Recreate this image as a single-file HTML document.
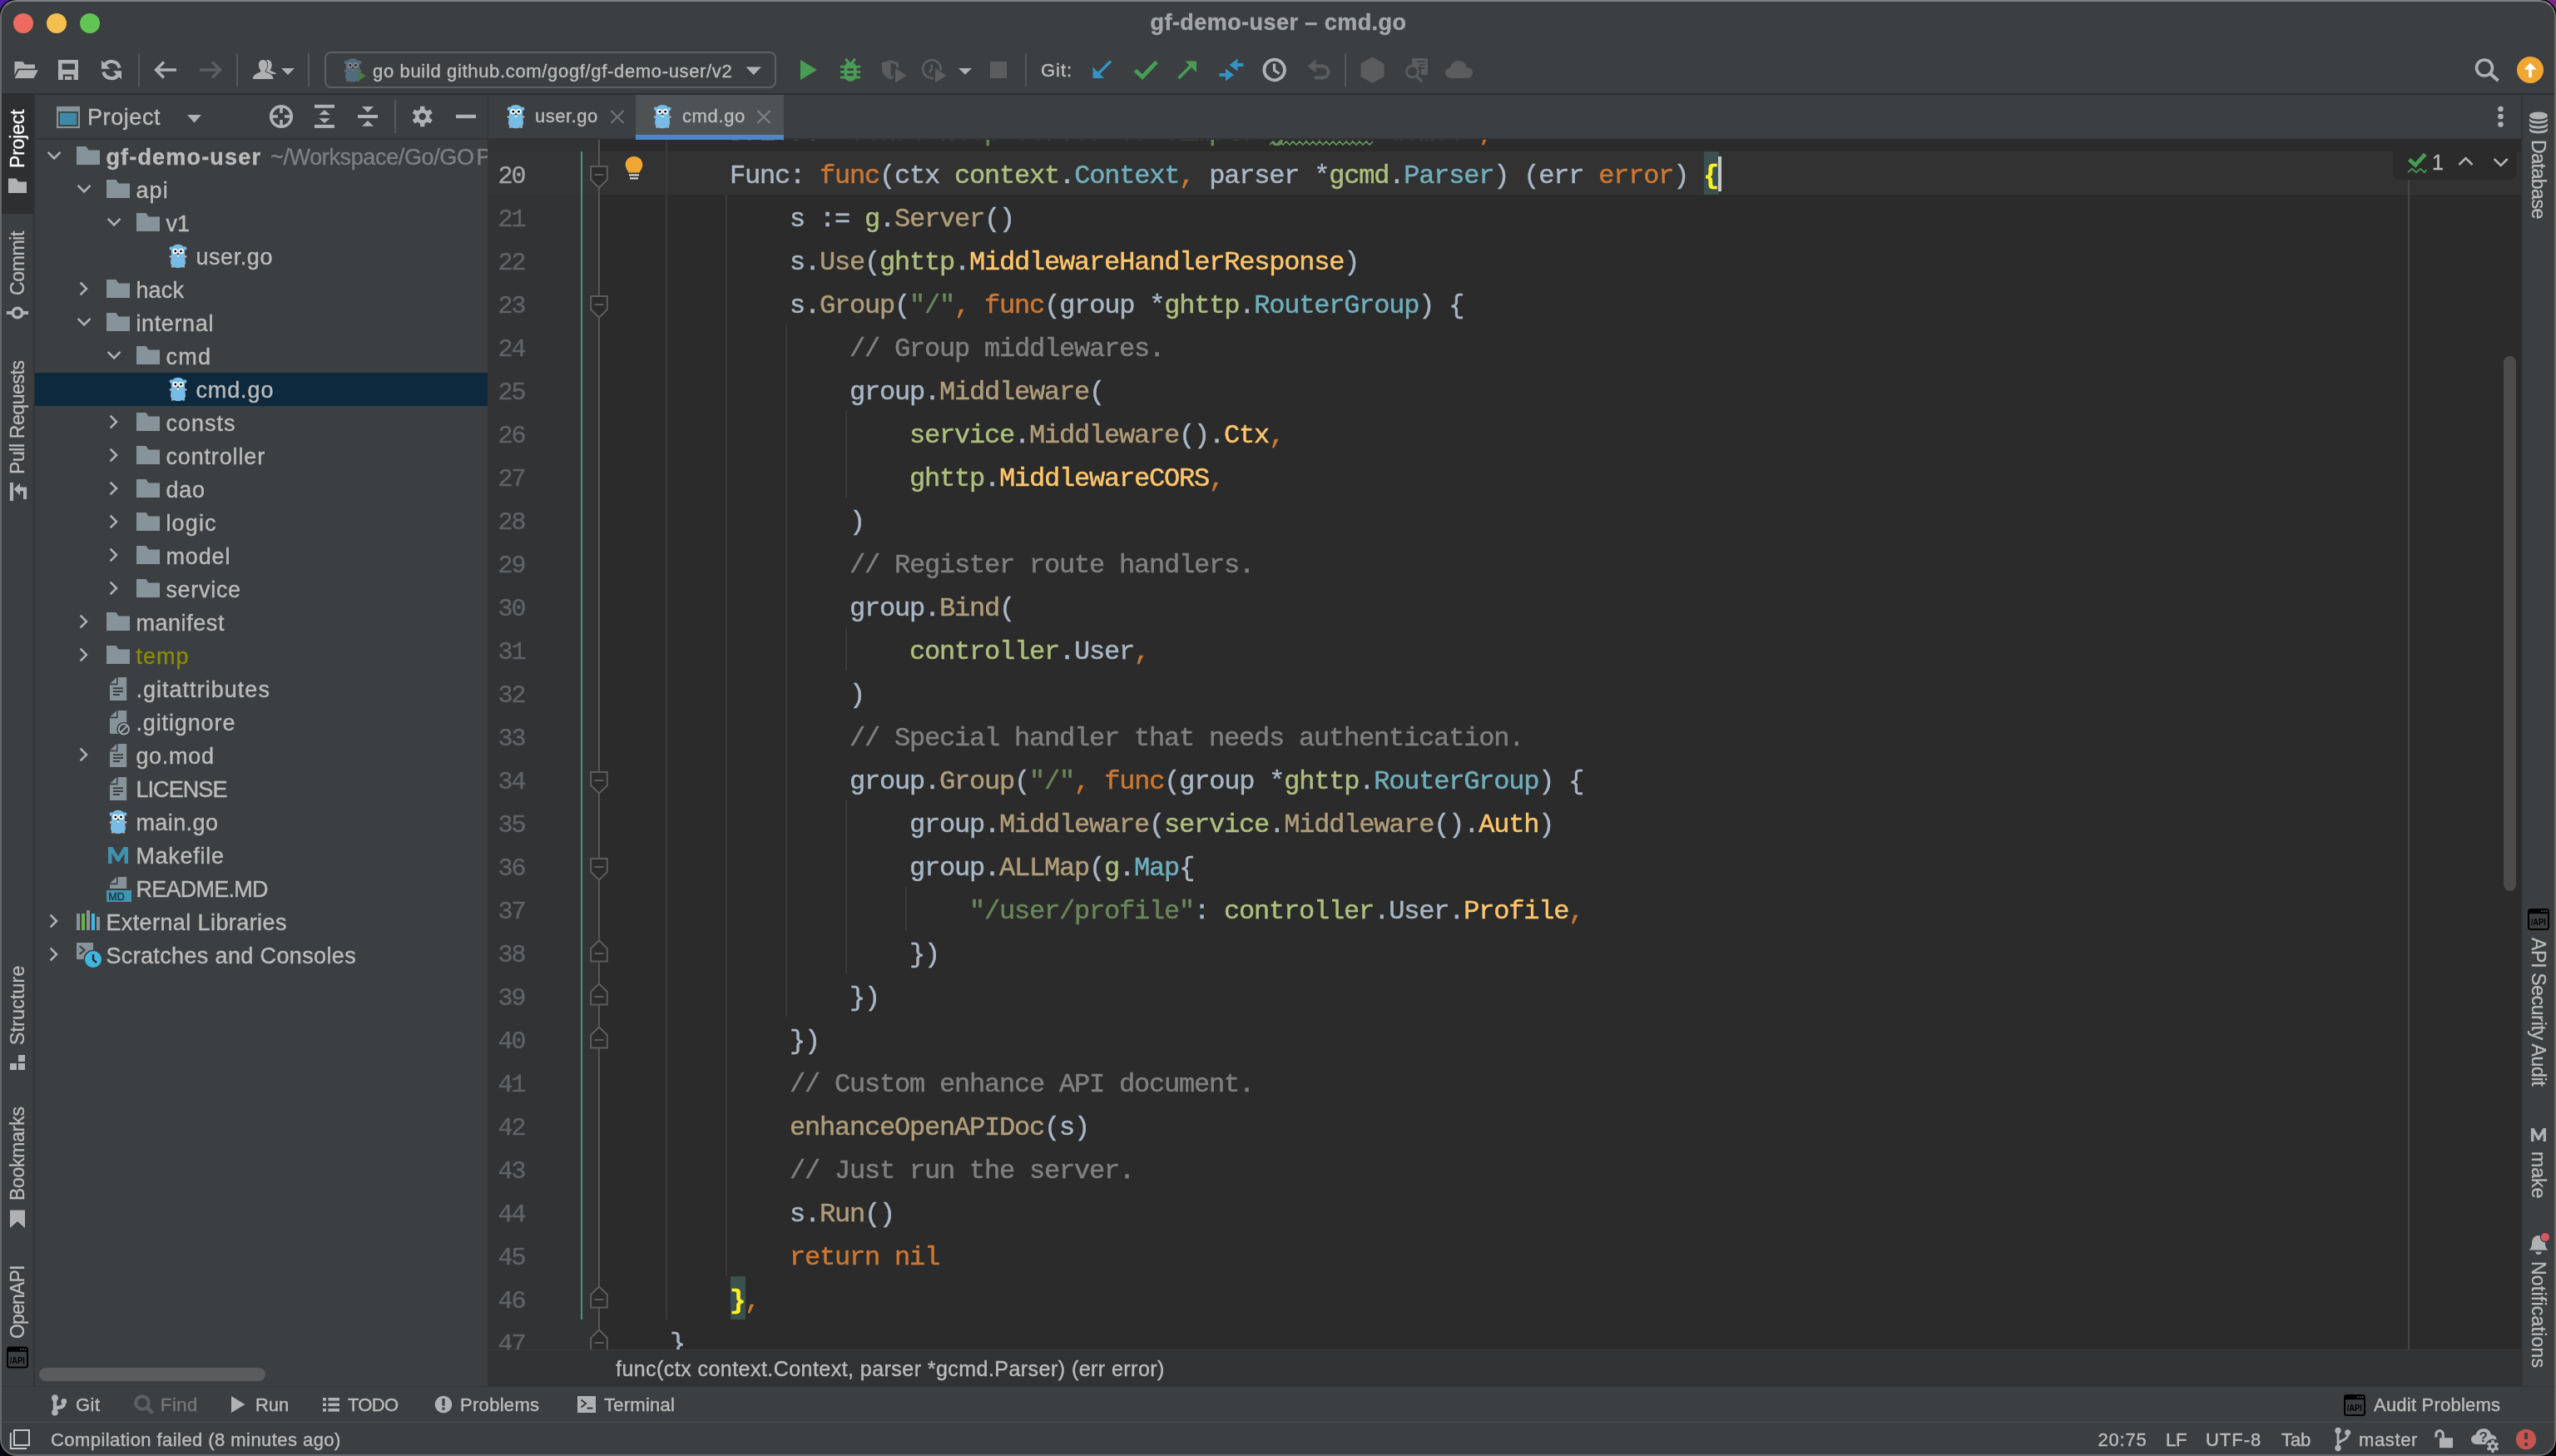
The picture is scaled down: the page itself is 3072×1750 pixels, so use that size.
<!DOCTYPE html>
<html lang="en"><head><meta charset="utf-8"><title>gf-demo-user – cmd.go</title>
<style>
html,body{margin:0;padding:0;}
body{width:3072px;height:1750px;overflow:hidden;background:#0a0814;font-family:"Liberation Sans",sans-serif;position:relative;}
.win{position:absolute;left:0;top:0;width:3072px;height:1750px;border-radius:20px;background:#3c3f41;overflow:hidden;will-change:transform;box-shadow:0 0 0 1.5px #000;}
.frame{position:absolute;left:0;top:0;width:3068px;height:1746px;border-radius:20px;border:2px solid #66686a;border-top-color:#7e8082;pointer-events:none;}
.b{position:absolute;display:block;}
.t{position:absolute;white-space:pre;line-height:1;-webkit-text-stroke:0.4px currentColor;}
.cl{position:absolute;left:0;white-space:pre;font-family:"Liberation Mono",monospace;font-size:32px;letter-spacing:-1.2px;line-height:52px;height:52px;color:#a9b7c6;-webkit-text-stroke:0.45px currentColor;}
.k{color:#cc7832}.p{color:#afbf7e}.y{color:#6fafbd}.f{color:#b09d79}.d{color:#ffc66d}.s{color:#6a8759}.c{color:#808080}.hb{color:#ffef28;font-weight:bold}
.ln{position:absolute;font-family:"Liberation Mono",monospace;font-size:30px;letter-spacing:-2px;-webkit-text-stroke:0.4px currentColor;line-height:52px;height:52px;color:#606366;white-space:pre;}
.vt{position:absolute;white-space:pre;line-height:1;font-size:23px;color:#bbbbbb;transform-origin:0 0;-webkit-text-stroke:0.3px currentColor;}
</style></head>
<body>
<div class="b" style="left:0;top:0;width:40px;height:40px;background:#4a1f9e"></div><div class="b" style="left:3032px;top:0;width:40px;height:40px;background:#782b8a"></div>
<div class="win">
<div class="b" style="left:16px;top:16px;width:24px;height:24px;background:#ec6a5e;border-radius:50%;"></div>
<div class="b" style="left:56px;top:16px;width:24px;height:24px;background:#f4bf4f;border-radius:50%;"></div>
<div class="b" style="left:96px;top:16px;width:24px;height:24px;background:#61c554;border-radius:50%;"></div>
<div class="t fit" style="left:1383.5px;top:13.74px;font-size:27px;color:#a5a6a8;font-weight:700;letter-spacing:0.448px;text-indent:-1.00px;">gf-demo-user – cmd.go</div>
<div class="b" style="left:0px;top:112px;width:3072px;height:2px;background:#2d2f30;"></div>
<svg class="b" style="left:0px;top:56px;" width="3072" height="56" viewBox="0 56 3072 56"><path d="M17.5,74 H27.5 L29.7,77.6 H42 V82.6 H21.3 L17.5,90.5 Z" fill="#afb1b3"/><path d="M22.8,84.3 H45.8 L40.5,94 H17.5 Z" fill="#afb1b3"/><path d="M70,72 H94 V96 H88.6 V89.4 H75.8 V96 H70 Z M74.6,76.4 V83.8 H90 V76.4 Z" fill="#afb1b3" fill-rule="evenodd"/><rect x="78" y="91.8" width="8.2" height="4.2" fill="#afb1b3"/><path d="M125.2,79.5 A9.8,9.8 0 0 1 143.6,81.5" fill="none" stroke="#afb1b3" stroke-width="4.2"/><path d="M122,72.5 V82.8 H132.3 Z" fill="#afb1b3"/><path d="M142.8,88.5 A9.8,9.8 0 0 1 124.4,86.5" fill="none" stroke="#afb1b3" stroke-width="4.2"/><path d="M146,95.5 V85.2 H135.7 Z" fill="#afb1b3"/><rect x="166" y="64" width="2" height="40" fill="#55585a"/><rect x="284" y="64" width="2" height="40" fill="#55585a"/><rect x="370" y="64" width="2" height="40" fill="#55585a"/><rect x="1232" y="64" width="2" height="40" fill="#55585a"/><rect x="1616" y="64" width="2" height="40" fill="#55585a"/><path d="M212,84 H187.5 M197.0,74.5 L187.5,84 L197.0,93.5" fill="none" stroke="#afb1b3" stroke-width="3.4"/><path d="M240,84 H264.5 M255.0,74.5 L264.5,84 L255.0,93.5" fill="none" stroke="#5c5f61" stroke-width="3.4"/><path d="M321.5,72 C324.9,72 326.7,74.600 326.700,78 C326.700,81 325.500,83.400 324.300,84.600 C326.500,86.300 331.500,86.600 332.100,88.900 H316 V72.800 C317.600,72.300 319.500,72 321.500,72 Z" fill="#afb1b3"/><path d="M316,72 C319.4,72 321.2,74.6 321.2,78 C321.2,81 320,83.4 318.6,84.8 C318.6,85.8 319,86.4 320,86.9 C323.5,88.4 328,89.5 328.6,94.9 H303.7 C304.3,89.5 308.6,88.4 312,86.9 C313,86.4 313.4,85.8 313.4,84.8 C312,83.4 310.9,81 310.9,78 C310.9,74.6 312.6,72 316,72 Z" fill="#afb1b3" stroke="#3c3f41" stroke-width="1.8" paint-order="stroke"/><path d="M338,82 H354 L346.0,90 Z" fill="#afb1b3"/><rect x="391" y="63" width="541" height="42" rx="7" ry="7" fill="none" stroke="#5e6163" stroke-width="2"/><g transform="translate(413.5,70) scale(1.0)" opacity="0.36"><circle cx="2.4" cy="5" r="2.3" fill="#76bce6"/><circle cx="18.6" cy="5" r="2.3" fill="#76bce6"/><circle cx="1.5" cy="15" r="1.4" fill="#d2a283"/><circle cx="19.5" cy="15" r="1.4" fill="#d2a283"/><circle cx="3.9" cy="26.8" r="1.5" fill="#d2a283"/><circle cx="17.1" cy="26.8" r="1.5" fill="#d2a283"/><path d="M10.5,0.3 C15.6,0.3 18.6,3.4 18.6,8 L18.6,14 C18.6,17 19.5,19 19.5,22 C19.5,26 15.5,28.5 10.5,28.5 C5.5,28.5 1.5,26 1.5,22 C1.5,19 2.4,17 2.4,14 L2.4,8 C2.4,3.4 5.4,0.3 10.5,0.3 Z" fill="#76bce6"/><circle cx="7" cy="8.4" r="3.2" fill="#fff"/><circle cx="14" cy="8.4" r="3.2" fill="#fff"/><circle cx="7.3" cy="8.5" r="1.4" fill="#000"/><circle cx="14" cy="8.5" r="1.4" fill="#000"/><ellipse cx="10.5" cy="12.6" rx="1.7" ry="1.1" fill="#d2a283"/><ellipse cx="10.5" cy="11.6" rx="1.2" ry="0.9" fill="#111"/><rect x="9.6" y="13.3" width="1.9" height="1.7" fill="#fff"/></g><path d="M430,84.6 L439.8,91.2 L430,97.8 Z" fill="#46784c"/><path d="M896.5,80.5 H915 L905.75,90 Z" fill="#afb1b3"/><path d="M962,72 L982,84 L962,96 Z" fill="#499c54"/><path d="M1022,74.6 C1026.6,74.6 1029.6,78 1029.6,82.5 V90 C1029.6,94.5 1026.4,97.8 1022,97.8 C1017.6,97.8 1014.6,94.5 1014.6,90 V82.5 C1014.6,78 1017.4,74.6 1022,74.6 Z" fill="#499c54"/><path d="M1016.2,70.8 L1020.4,76 M1027.8,70.8 L1023.6,76" stroke="#499c54" stroke-width="3" fill="none"/><rect x="1010" y="78.8" width="24.2" height="2.8" fill="#499c54"/><rect x="1010" y="85.0" width="24.2" height="2.8" fill="#499c54"/><rect x="1010" y="91.6" width="24.2" height="2.8" fill="#499c54"/><rect x="1018.4" y="82.2" width="7.4" height="2.8" fill="#3c3f41"/><rect x="1018.4" y="88.3" width="7.4" height="2.8" fill="#3c3f41"/><path d="M1060,75.5 L1070,72.3 L1080,75.5 V81 H1077 V77.6 L1070.6,75.6 V92.5 L1073.5,90.5 V94 L1070,95.6 C1063.5,92.5 1060,88 1060,82 Z" fill="#5b5c5d"/><path d="M1076,82 L1089.6,90.8 L1076,99.6 Z" fill="#5b5c5d"/><path d="M1122,93.6 A10.8,10.8 0 1 1 1130.6,84.5" fill="none" stroke="#5b5c5d" stroke-width="2.8"/><path d="M1119.8,77.5 V83.6 L1116.6,87.2" fill="none" stroke="#5b5c5d" stroke-width="2.4"/><path d="M1124,82 L1137.6,90.8 L1124,99.6 Z" fill="#5b5c5d"/><path d="M1152,82 H1168 L1160.0,89.8 Z" fill="#afb1b3"/><rect x="1190" y="74" width="20" height="20" fill="#5b5c5d"/><path d="M1335,73.5 L1317,91.5" stroke="#3592c4" stroke-width="3.6" fill="none"/><path d="M1313.5,94 V80.5 L1327,94 Z" fill="#3592c4"/><path d="M1364.5,84.5 L1373,92.5 L1390,74.5" stroke="#499c54" stroke-width="4.8" fill="none"/><path d="M1416.5,94 L1434,76.5" stroke="#499c54" stroke-width="3.6" fill="none"/><path d="M1438,73.5 V87 L1424.500,73.500 Z" fill="#499c54"/><path d="M1494.5,78 H1485" stroke="#3592c4" stroke-width="4" fill="none"/><path d="M1487.5,70.500 V85.5 L1477.500,78 Z" fill="#3592c4"/><path d="M1465.5,90 H1475" stroke="#3592c4" stroke-width="4" fill="none"/><path d="M1473,82.500 V97.5 L1483,90 Z" fill="#3592c4"/><circle cx="1531.7" cy="84" r="12.3" fill="none" stroke="#afb1b3" stroke-width="3.8"/><path d="M1531.500,76.5 V84.5 L1537.5,88.5" fill="none" stroke="#afb1b3" stroke-width="3.2"/><path d="M1578,79.5 H1589 C1594,79.5 1596.5,83 1596.5,86.500 C1596.5,90.5 1594,93.5 1589,93.5 H1580" fill="none" stroke="#5b5c5d" stroke-width="3.8"/><path d="M1581.500,71.500 V87.5 L1571.500,79.5 Z" fill="#5b5c5d"/><path d="M1649.500,68.500 L1663.500,76.500 V92 L1649.500,100 L1635.500,92 V76.500 Z" fill="#5b5c5d"/><path d="M1697,70 H1716 V90 H1708 V80 H1697 Z" fill="#5b5c5d"/><path d="M1703,74 H1712.500 M1706,78 H1712.500 M1708,82 H1712.500" stroke="#3c3f41" stroke-width="1.6"/><circle cx="1697.5" cy="86" r="7" fill="#3c3f41" stroke="#5b5c5d" stroke-width="2.8"/><path d="M1702.500,91.500 L1709,98" stroke="#5b5c5d" stroke-width="3.2"/><path d="M1745,94 C1739,94 1737,90 1737,87.500 C1737,84 1740,81.500 1743,81.500 C1744,76 1748.500,73 1753,73 C1758.500,73 1762,77 1762.500,81 C1767,81 1770,84 1770,87.500 C1770,91 1767.500,94 1763,94 Z" fill="#5b5c5d"/><circle cx="2986" cy="81.500" r="9.5" fill="none" stroke="#afb1b3" stroke-width="3.6"/><path d="M2993,88.500 L3002.500,97" stroke="#afb1b3" stroke-width="4"/><circle cx="3041" cy="84" r="16" fill="#f0a732"/><path d="M3041,93 V78" stroke="#fff" stroke-width="3.6"/><path d="M3033.500,83.500 L3041,75.500 L3048.500,83.500 Z" fill="#fff"/></svg>
<div class="t fit" style="left:448px;top:74.88px;font-size:22px;color:#bbbbbb;letter-spacing:0.660px;text-indent:0.00px;">go build github.com/gogf/gf-demo-user/v2</div>
<div class="t fit" style="left:1252px;top:74.38px;font-size:22px;color:#bbbbbb;letter-spacing:0.963px;text-indent:-1.00px;">Git:</div>
<div class="b" style="left:0px;top:114px;width:40px;height:1552px;background:#3c3f41;"></div>
<div class="b" style="left:2px;top:114px;width:38px;height:143px;background:#2d2f31;"></div>
<div class="b" style="left:40px;top:114px;width:2px;height:1552px;background:#323435;"></div>
<div class="vt fit" style="left:9.53px;top:200.5px;font-size:23px;color:#ffffff;transform:rotate(-90deg);letter-spacing:-0.199px;text-indent:-1.00px;">Project</div>
<div class="vt fit" style="left:9.53px;top:354px;font-size:23px;color:#bbbbbb;transform:rotate(-90deg);letter-spacing:-0.366px;text-indent:-1.00px;">Commit</div>
<div class="vt fit" style="left:9.53px;top:568.5px;font-size:23px;color:#bbbbbb;transform:rotate(-90deg);letter-spacing:-0.409px;text-indent:-1.00px;">Pull Requests</div>
<div class="vt fit" style="left:9.53px;top:1255px;font-size:23px;color:#bbbbbb;transform:rotate(-90deg);letter-spacing:0.247px;text-indent:-1.00px;">Structure</div>
<div class="vt fit" style="left:9.53px;top:1442.4px;font-size:23px;color:#bbbbbb;transform:rotate(-90deg);letter-spacing:-0.267px;text-indent:-1.00px;">Bookmarks</div>
<div class="vt fit" style="left:9.53px;top:1608px;font-size:23px;color:#bbbbbb;transform:rotate(-90deg);letter-spacing:-0.824px;text-indent:-1.00px;">OpenAPI</div>
<svg class="b" style="left:0px;top:114px;" width="40" height="1552" viewBox="0 114 40 1552"><path d="M10,214.500 H19.500 L22,218.500 H32 V232 H10 Z" fill="#afb1b3"/><rect x="7.9" y="374" width="26.2" height="4" fill="#afb1b3"/><circle cx="21" cy="376" r="7.6" fill="#afb1b3"/><circle cx="21" cy="376" r="3.8" fill="#3c3f41"/><rect x="11.9" y="580" width="4.2" height="22" fill="#afb1b3"/><path d="M16.700,588 L24.100,580.700 V585.600 H32.100 V600 H28 V590.200 H24.100 V595.200 Z" fill="#afb1b3"/><rect x="12" y="1278" width="8" height="8" fill="#afb1b3"/><rect x="22" y="1278" width="8" height="8" fill="#afb1b3"/><rect x="22" y="1268" width="8" height="8" fill="#afb1b3"/><path d="M12,1454.500 H30 V1476 L21,1468 L12,1476 Z" fill="#afb1b3"/><rect x="9" y="1619.5" width="24" height="24" rx="2.5" fill="#3c3f41" stroke="#000" stroke-width="2"/><rect x="9" y="1619.5" width="24" height="5.2" fill="#000"/><rect x="24.1" y="1620.9" width="1.5" height="1.5" fill="#777"/><rect x="27.1" y="1620.9" width="1.5" height="1.5" fill="#777"/><rect x="30.0" y="1620.9" width="1.5" height="1.5" fill="#777"/><text x="11.8" y="1638.5" font-family="Liberation Sans, sans-serif" font-weight="700" font-size="11.5" fill="#000" textLength="18" lengthAdjust="spacingAndGlyphs">/API</text></svg>
<div class="b" style="left:3030px;top:114px;width:42px;height:1552px;background:#3c3f41;"></div>
<div class="b" style="left:3030px;top:114px;width:2px;height:1552px;background:#323435;"></div>
<div class="vt fit" style="left:3062.47px;top:168.5px;font-size:23px;color:#bbbbbb;transform:rotate(90deg);letter-spacing:-0.452px;text-indent:-1.00px;">Database</div>
<div class="vt fit" style="left:3062.47px;top:1127px;font-size:23px;color:#bbbbbb;transform:rotate(90deg);letter-spacing:-0.322px;text-indent:0.00px;">API Security Audit</div>
<div class="vt fit" style="left:3062.47px;top:1385px;font-size:23px;color:#bbbbbb;transform:rotate(90deg);letter-spacing:0.016px;text-indent:-1.00px;">make</div>
<div class="vt fit" style="left:3062.47px;top:1516.5px;font-size:23px;color:#bbbbbb;transform:rotate(90deg);letter-spacing:0.227px;text-indent:-1.00px;">Notifications</div>
<svg class="b" style="left:3030px;top:114px;" width="42" height="1552" viewBox="3030 114 42 1552"><ellipse cx="3051" cy="139" rx="11" ry="4.6" fill="#afb1b3"/><path d="M3040,141.5 C3040,147.0 3062,147.0 3062,141.5 V144.5 C3062,150.0 3040,150.0 3040,144.5 Z" fill="#afb1b3"/><path d="M3040,147.5 C3040,153.0 3062,153.0 3062,147.5 V150.5 C3062,156.0 3040,156.0 3040,150.5 Z" fill="#afb1b3"/><path d="M3040,153.3 C3040,158.8 3062,158.8 3062,153.3 V156.3 C3062,161.8 3040,161.8 3040,156.3 Z" fill="#afb1b3"/><rect x="3039" y="1093" width="24" height="24" rx="2.5" fill="#3c3f41" stroke="#000" stroke-width="2"/><rect x="3039" y="1093" width="24" height="5.2" fill="#000"/><rect x="3054.1" y="1094.4" width="1.5" height="1.5" fill="#777"/><rect x="3057.1" y="1094.4" width="1.5" height="1.5" fill="#777"/><rect x="3060.0" y="1094.4" width="1.5" height="1.5" fill="#777"/><text x="3041.8" y="1112" font-family="Liberation Sans, sans-serif" font-weight="700" font-size="11.5" fill="#000" textLength="18" lengthAdjust="spacingAndGlyphs">/API</text><path d="M3042,1372 V1356 H3045.600 L3051,1365.500 L3056.400,1356 H3060 V1372 H3056.600 V1362.500 L3052,1370.500 H3050 L3045.400,1362.500 V1372 Z" fill="#afb1b3"/><path d="M3051,1485 C3056,1485 3059,1489 3059,1494 C3059,1499 3061,1501 3062.500,1502.500 H3039.500 C3041,1501 3043,1499 3043,1494 C3043,1489 3046,1485 3051,1485 Z" fill="#afb1b3"/><path d="M3047.300,1504.500 H3054.700 C3054.700,1509.300 3047.300,1509.300 3047.300,1504.500 Z" fill="#afb1b3"/><circle cx="3059" cy="1487" r="6.2" fill="#3c3f41"/><circle cx="3059" cy="1487" r="5" fill="#db5860"/></svg>
<div class="b" style="left:42px;top:166px;width:544px;height:2px;background:#323435;"></div>
<svg class="b" style="left:42px;top:114px;" width="546" height="52" viewBox="42 114 546 52"><rect x="69.100" y="129" width="25.800" height="24" fill="#3c3f41" stroke="#87939a" stroke-width="2.2"/><rect x="68" y="128" width="28" height="6" fill="#87939a"/><rect x="72" y="135.700" width="20" height="14.400" fill="#3d8aa8"/><path d="M225,138 H242 L233.5,147.5 Z" fill="#afb1b3"/><circle cx="338" cy="140" r="12.300" fill="none" stroke="#afb1b3" stroke-width="3.6"/><path d="M338,127 V136 M338,144 V153 M325,140 H334 M342,140 H351" stroke="#afb1b3" stroke-width="3.6" fill="none"/><rect x="378" y="125.800" width="24" height="4" fill="#afb1b3"/><rect x="378" y="149.900" width="24" height="4" fill="#afb1b3"/><path d="M383.300,138 H396.800 L390,132.200 Z M383.300,142.200 H396.800 L390,148 Z" fill="#afb1b3"/><rect x="430" y="138" width="24" height="4" fill="#afb1b3"/><path d="M435,128 H449 L442,135 Z M435,151.800 H449 L442,145 Z" fill="#afb1b3"/><rect x="474" y="120" width="2" height="40" fill="#55585a"/><path d="M504.85,131.67 L505.07,127.68 L510.33,127.68 L510.55,131.67 L513.48,133.37 L517.06,131.56 L519.69,136.11 L516.34,138.31 L516.34,141.69 L519.69,143.89 L517.06,148.44 L513.48,146.63 L510.55,148.33 L510.33,152.32 L505.07,152.32 L504.85,148.33 L501.92,146.63 L498.34,148.44 L495.71,143.89 L499.06,141.69 L499.06,138.31 L495.71,136.11 L498.34,131.56 L501.92,133.37 Z M511.9,140 A4.2,4.2 0 1 0 503.5,140 A4.2,4.2 0 1 0 511.9,140 Z" fill="#afb1b3" fill-rule="evenodd"/><rect x="548" y="137.800" width="24" height="4.300" fill="#afb1b3"/></svg>
<div class="t fit" style="left:107px;top:127.64px;font-size:27px;color:#bbbbbb;letter-spacing:0.578px;text-indent:-2.00px;">Project</div>
<div class="b" style="left:42px;top:167px;width:544px;height:1499px;overflow:hidden;">
<div class="b" style="left:0;top:281px;width:544px;height:40px;background:#0d293e;"></div>
<svg class="b" style="left:0;top:0;" width="544" height="1499" viewBox="42 167 544 1499"><path d="M57.699999999999996,182.9 L65.1,190.29999999999998 L72.5,182.9" fill="none" stroke="#afb1b3" stroke-width="2.6"/><path d="M92,176 h11.5 l3,4.5 h13.5 v17.5 h-28 z" fill="#87939a"/><path d="M93.69999999999999,222.9 L101.1,230.29999999999998 L108.5,222.9" fill="none" stroke="#afb1b3" stroke-width="2.6"/><path d="M128,216 h11.5 l3,4.5 h13.5 v17.5 h-28 z" fill="#87939a"/><path d="M129.7,262.90000000000003 L137.1,270.3 L144.5,262.90000000000003" fill="none" stroke="#afb1b3" stroke-width="2.6"/><path d="M164,256 h11.5 l3,4.5 h13.5 v17.5 h-28 z" fill="#87939a"/><g transform="translate(203.5,293.5) scale(1.0)" opacity="1"><circle cx="2.4" cy="5" r="2.3" fill="#76bce6"/><circle cx="18.6" cy="5" r="2.3" fill="#76bce6"/><circle cx="1.5" cy="15" r="1.4" fill="#d2a283"/><circle cx="19.5" cy="15" r="1.4" fill="#d2a283"/><circle cx="3.9" cy="26.8" r="1.5" fill="#d2a283"/><circle cx="17.1" cy="26.8" r="1.5" fill="#d2a283"/><path d="M10.5,0.3 C15.6,0.3 18.6,3.4 18.6,8 L18.6,14 C18.6,17 19.5,19 19.5,22 C19.5,26 15.5,28.5 10.5,28.5 C5.5,28.5 1.5,26 1.5,22 C1.5,19 2.4,17 2.4,14 L2.4,8 C2.4,3.4 5.4,0.3 10.5,0.3 Z" fill="#76bce6"/><circle cx="7" cy="8.4" r="3.2" fill="#fff"/><circle cx="14" cy="8.4" r="3.2" fill="#fff"/><circle cx="7.3" cy="8.5" r="1.4" fill="#000"/><circle cx="14" cy="8.5" r="1.4" fill="#000"/><ellipse cx="10.5" cy="12.6" rx="1.7" ry="1.1" fill="#d2a283"/><ellipse cx="10.5" cy="11.6" rx="1.2" ry="0.9" fill="#111"/><rect x="9.6" y="13.3" width="1.9" height="1.7" fill="#fff"/></g><path d="M96.6,339.6 L104.0,347 L96.6,354.4" fill="none" stroke="#afb1b3" stroke-width="2.6"/><path d="M128,336 h11.5 l3,4.5 h13.5 v17.5 h-28 z" fill="#87939a"/><path d="M93.69999999999999,382.90000000000003 L101.1,390.3 L108.5,382.90000000000003" fill="none" stroke="#afb1b3" stroke-width="2.6"/><path d="M128,376 h11.5 l3,4.5 h13.5 v17.5 h-28 z" fill="#87939a"/><path d="M129.7,422.90000000000003 L137.1,430.3 L144.5,422.90000000000003" fill="none" stroke="#afb1b3" stroke-width="2.6"/><path d="M164,416 h11.5 l3,4.5 h13.5 v17.5 h-28 z" fill="#87939a"/><g transform="translate(203.5,453.5) scale(1.0)" opacity="1"><circle cx="2.4" cy="5" r="2.3" fill="#76bce6"/><circle cx="18.6" cy="5" r="2.3" fill="#76bce6"/><circle cx="1.5" cy="15" r="1.4" fill="#d2a283"/><circle cx="19.5" cy="15" r="1.4" fill="#d2a283"/><circle cx="3.9" cy="26.8" r="1.5" fill="#d2a283"/><circle cx="17.1" cy="26.8" r="1.5" fill="#d2a283"/><path d="M10.5,0.3 C15.6,0.3 18.6,3.4 18.6,8 L18.6,14 C18.6,17 19.5,19 19.5,22 C19.5,26 15.5,28.5 10.5,28.5 C5.5,28.5 1.5,26 1.5,22 C1.5,19 2.4,17 2.4,14 L2.4,8 C2.4,3.4 5.4,0.3 10.5,0.3 Z" fill="#76bce6"/><circle cx="7" cy="8.4" r="3.2" fill="#fff"/><circle cx="14" cy="8.4" r="3.2" fill="#fff"/><circle cx="7.3" cy="8.5" r="1.4" fill="#000"/><circle cx="14" cy="8.5" r="1.4" fill="#000"/><ellipse cx="10.5" cy="12.6" rx="1.7" ry="1.1" fill="#d2a283"/><ellipse cx="10.5" cy="11.6" rx="1.2" ry="0.9" fill="#111"/><rect x="9.6" y="13.3" width="1.9" height="1.7" fill="#fff"/></g><path d="M132.60000000000002,499.6 L140.0,507 L132.60000000000002,514.4" fill="none" stroke="#afb1b3" stroke-width="2.6"/><path d="M164,496 h11.5 l3,4.5 h13.5 v17.5 h-28 z" fill="#87939a"/><path d="M132.60000000000002,539.6 L140.0,547 L132.60000000000002,554.4" fill="none" stroke="#afb1b3" stroke-width="2.6"/><path d="M164,536 h11.5 l3,4.5 h13.5 v17.5 h-28 z" fill="#87939a"/><path d="M132.60000000000002,579.6 L140.0,587 L132.60000000000002,594.4" fill="none" stroke="#afb1b3" stroke-width="2.6"/><path d="M164,576 h11.5 l3,4.5 h13.5 v17.5 h-28 z" fill="#87939a"/><path d="M132.60000000000002,619.6 L140.0,627 L132.60000000000002,634.4" fill="none" stroke="#afb1b3" stroke-width="2.6"/><path d="M164,616 h11.5 l3,4.5 h13.5 v17.5 h-28 z" fill="#87939a"/><path d="M132.60000000000002,659.6 L140.0,667 L132.60000000000002,674.4" fill="none" stroke="#afb1b3" stroke-width="2.6"/><path d="M164,656 h11.5 l3,4.5 h13.5 v17.5 h-28 z" fill="#87939a"/><path d="M132.60000000000002,699.6 L140.0,707 L132.60000000000002,714.4" fill="none" stroke="#afb1b3" stroke-width="2.6"/><path d="M164,696 h11.5 l3,4.5 h13.5 v17.5 h-28 z" fill="#87939a"/><path d="M96.6,739.6 L104.0,747 L96.6,754.4" fill="none" stroke="#afb1b3" stroke-width="2.6"/><path d="M128,736 h11.5 l3,4.5 h13.5 v17.5 h-28 z" fill="#87939a"/><path d="M96.6,779.6 L104.0,787 L96.6,794.4" fill="none" stroke="#afb1b3" stroke-width="2.6"/><path d="M128,776 h11.5 l3,4.5 h13.5 v17.5 h-28 z" fill="#87939a"/><path d="M141.6,814 H152.2 V842 H132 V823.3 H141.6 Z" fill="#87939a"/><path d="M140,814.2 V821.6 H132.4 Z" fill="#87939a"/><rect x="135.9" y="826.3" width="12.1" height="1.9" fill="#393b3d"/><rect x="135.9" y="830.1" width="12.1" height="1.9" fill="#393b3d"/><rect x="135.9" y="834" width="8" height="1.9" fill="#393b3d"/><path d="M141.6,854 H152.2 V882 H132 V863.3 H141.6 Z" fill="#87939a"/><path d="M140,854.2 V861.6 H132.4 Z" fill="#87939a"/><circle cx="148.9" cy="876.4" r="8.700" fill="#3c3f41"/><circle cx="148.9" cy="876.4" r="6.100" fill="none" stroke="#9aa7b0" stroke-width="2"/><path d="M144.8,880.5 L153,872.3" stroke="#9aa7b0" stroke-width="2"/><path d="M96.6,899.6 L104.0,907 L96.6,914.4" fill="none" stroke="#afb1b3" stroke-width="2.6"/><path d="M141.6,894 H152.2 V922 H132 V903.3 H141.6 Z" fill="#87939a"/><path d="M140,894.2 V901.6 H132.4 Z" fill="#87939a"/><rect x="135.9" y="906.3" width="12.1" height="1.9" fill="#393b3d"/><rect x="135.9" y="910.1" width="12.1" height="1.9" fill="#393b3d"/><rect x="135.9" y="914" width="8" height="1.9" fill="#393b3d"/><path d="M141.6,934 H152.2 V962 H132 V943.3 H141.6 Z" fill="#87939a"/><path d="M140,934.2 V941.6 H132.4 Z" fill="#87939a"/><rect x="135.9" y="946.3" width="12.1" height="1.9" fill="#393b3d"/><rect x="135.9" y="950.1" width="12.1" height="1.9" fill="#393b3d"/><rect x="135.9" y="954" width="8" height="1.9" fill="#393b3d"/><g transform="translate(131.5,973.5) scale(1.0)" opacity="1"><circle cx="2.4" cy="5" r="2.3" fill="#76bce6"/><circle cx="18.6" cy="5" r="2.3" fill="#76bce6"/><circle cx="1.5" cy="15" r="1.4" fill="#d2a283"/><circle cx="19.5" cy="15" r="1.4" fill="#d2a283"/><circle cx="3.9" cy="26.8" r="1.5" fill="#d2a283"/><circle cx="17.1" cy="26.8" r="1.5" fill="#d2a283"/><path d="M10.5,0.3 C15.6,0.3 18.6,3.4 18.6,8 L18.6,14 C18.6,17 19.5,19 19.5,22 C19.5,26 15.5,28.5 10.5,28.5 C5.5,28.5 1.5,26 1.5,22 C1.5,19 2.4,17 2.4,14 L2.4,8 C2.4,3.4 5.4,0.3 10.5,0.3 Z" fill="#76bce6"/><circle cx="7" cy="8.4" r="3.2" fill="#fff"/><circle cx="14" cy="8.4" r="3.2" fill="#fff"/><circle cx="7.3" cy="8.5" r="1.4" fill="#000"/><circle cx="14" cy="8.5" r="1.4" fill="#000"/><ellipse cx="10.5" cy="12.6" rx="1.7" ry="1.1" fill="#d2a283"/><ellipse cx="10.5" cy="11.6" rx="1.2" ry="0.9" fill="#111"/><rect x="9.6" y="13.3" width="1.9" height="1.7" fill="#fff"/></g><path d="M130,1038 V1018 H135.5 L142,1029 L148.5,1018 H154 V1038 H149.5 V1025.5 L143.5,1035.5 H140.5 L134.5,1025.5 V1038 Z" fill="#3e91b0"/><path d="M141.6,1054 H152.2 V1068 H132 V1063.3 H141.6 Z" fill="#87939a"/><path d="M140,1054.2 V1061.6 H132.4 Z" fill="#87939a"/><rect x="128" y="1070" width="30" height="14" fill="#4195b2"/><text x="130.3" y="1081.8" font-family="Liberation Sans, sans-serif" font-weight="400" font-size="12.5" fill="#1d3b47" stroke="#1d3b47" stroke-width="0.5" textLength="19.5" lengthAdjust="spacingAndGlyphs">MD</text><path d="M60.599999999999994,1099.6 L68.0,1107 L60.599999999999994,1114.4" fill="none" stroke="#afb1b3" stroke-width="2.6"/><rect x="92" y="1098" width="4" height="20" fill="#87939a"/><rect x="98" y="1098" width="4" height="20" fill="#62b543"/><rect x="104" y="1094" width="4" height="24" fill="#87939a"/><rect x="110" y="1098" width="4" height="20" fill="#40b6e0"/><rect x="116" y="1102" width="4" height="16" fill="#87939a"/><path d="M60.599999999999994,1139.6 L68.0,1147 L60.599999999999994,1154.4" fill="none" stroke="#afb1b3" stroke-width="2.6"/><rect x="92" y="1133" width="20" height="20" fill="#87939a"/><path d="M95.5,1137 L101.5,1142 L95.5,1147" stroke="#3c3f41" stroke-width="2.200" fill="none"/><circle cx="112" cy="1153" r="11.500" fill="#3c3f41"/><circle cx="112" cy="1153" r="10" fill="#40b6e0"/><path d="M112,1147 V1153.5 L116,1157" stroke="#2b2b2b" stroke-width="2.400" fill="none"/></svg>
<div class="t fit noind" style="left:85.40px;top:8.64px;font-size:27px;color:#bbbbbb;font-weight:700;letter-spacing:1.182px;">gf-demo-user</div>
<div class="t fit noind" style="left:121.40px;top:48.64px;font-size:27px;color:#bbbbbb;letter-spacing:1.184px;">api</div>
<div class="t " style="left:157.40px;top:88.64px;font-size:27px;color:#bbbbbb;">v1</div>
<div class="t fit noind" style="left:193.40px;top:128.64px;font-size:27px;color:#bbbbbb;letter-spacing:0.575px;">user.go</div>
<div class="t fit noind" style="left:121.40px;top:168.64px;font-size:27px;color:#bbbbbb;letter-spacing:0.156px;">hack</div>
<div class="t fit noind" style="left:121.40px;top:208.64px;font-size:27px;color:#bbbbbb;letter-spacing:0.635px;">internal</div>
<div class="t fit noind" style="left:157.40px;top:248.64px;font-size:27px;color:#bbbbbb;letter-spacing:1.304px;">cmd</div>
<div class="t fit noind" style="left:193.40px;top:288.64px;font-size:27px;color:#bbbbbb;letter-spacing:0.895px;">cmd.go</div>
<div class="t fit noind" style="left:157.40px;top:328.64px;font-size:27px;color:#bbbbbb;letter-spacing:1.033px;">consts</div>
<div class="t fit noind" style="left:157.40px;top:368.64px;font-size:27px;color:#bbbbbb;letter-spacing:0.861px;">controller</div>
<div class="t fit noind" style="left:157.40px;top:408.64px;font-size:27px;color:#bbbbbb;letter-spacing:0.784px;">dao</div>
<div class="t fit noind" style="left:157.40px;top:448.64px;font-size:27px;color:#bbbbbb;letter-spacing:1.168px;">logic</div>
<div class="t fit noind" style="left:157.40px;top:488.64px;font-size:27px;color:#bbbbbb;letter-spacing:0.865px;">model</div>
<div class="t fit noind" style="left:157.40px;top:528.64px;font-size:27px;color:#bbbbbb;letter-spacing:0.699px;">service</div>
<div class="t fit noind" style="left:121.40px;top:568.64px;font-size:27px;color:#bbbbbb;letter-spacing:0.566px;">manifest</div>
<div class="t fit noind" style="left:121.40px;top:608.64px;font-size:27px;color:#8a8a0a;letter-spacing:0.997px;">temp</div>
<div class="t fit noind" style="left:121.40px;top:648.64px;font-size:27px;color:#bbbbbb;letter-spacing:1.033px;">.gitattributes</div>
<div class="t fit noind" style="left:121.40px;top:688.64px;font-size:27px;color:#bbbbbb;letter-spacing:0.883px;">.gitignore</div>
<div class="t fit noind" style="left:121.40px;top:728.64px;font-size:27px;color:#bbbbbb;letter-spacing:0.692px;">go.mod</div>
<div class="t fit noind" style="left:121.40px;top:768.64px;font-size:27px;color:#bbbbbb;letter-spacing:-0.922px;">LICENSE</div>
<div class="t fit noind" style="left:121.40px;top:808.64px;font-size:27px;color:#bbbbbb;letter-spacing:0.410px;">main.go</div>
<div class="t fit noind" style="left:121.40px;top:848.64px;font-size:27px;color:#bbbbbb;letter-spacing:0.711px;">Makefile</div>
<div class="t fit noind" style="left:121.40px;top:888.64px;font-size:27px;color:#bbbbbb;letter-spacing:-0.751px;">README.MD</div>
<div class="t fit noind" style="left:85.40px;top:928.64px;font-size:27px;color:#bbbbbb;letter-spacing:0.406px;">External Libraries</div>
<div class="t fit noind" style="left:85.40px;top:968.64px;font-size:27px;color:#bbbbbb;letter-spacing:0.364px;">Scratches and Consoles</div>
<div class="t fit" style="left:284px;top:8.64px;font-size:27px;color:#7d7f80;letter-spacing:-0.365px;text-indent:-1.00px;">~/Workspace/Go/GO</div>
<div class="t" style="left:530.5px;top:8.64px;font-size:27px;color:#7d7f80;">PATH</div>
</div>
<div class="b" style="left:47px;top:1644px;width:272px;height:16px;background:#595b5d;border-radius:8px;"></div>
<div class="b" style="left:586px;top:114px;width:1px;height:1552px;background:#323435;"></div>
<div class="b" style="left:764px;top:114px;width:178px;height:52px;background:#4e5254;"></div>
<div class="b" style="left:587px;top:166px;width:2443px;height:2px;background:#313233;"></div>
<svg class="b" style="left:587px;top:114px;" width="2443" height="52" viewBox="587 114 2443 52"><g transform="translate(609.5,125.7) scale(1.0)" opacity="1"><circle cx="2.4" cy="5" r="2.3" fill="#76bce6"/><circle cx="18.6" cy="5" r="2.3" fill="#76bce6"/><circle cx="1.5" cy="15" r="1.4" fill="#d2a283"/><circle cx="19.5" cy="15" r="1.4" fill="#d2a283"/><circle cx="3.9" cy="26.8" r="1.5" fill="#d2a283"/><circle cx="17.1" cy="26.8" r="1.5" fill="#d2a283"/><path d="M10.5,0.3 C15.6,0.3 18.6,3.4 18.6,8 L18.6,14 C18.6,17 19.5,19 19.5,22 C19.5,26 15.5,28.5 10.5,28.5 C5.5,28.5 1.5,26 1.5,22 C1.5,19 2.4,17 2.4,14 L2.4,8 C2.4,3.4 5.4,0.3 10.5,0.3 Z" fill="#76bce6"/><circle cx="7" cy="8.4" r="3.2" fill="#fff"/><circle cx="14" cy="8.4" r="3.2" fill="#fff"/><circle cx="7.3" cy="8.5" r="1.4" fill="#000"/><circle cx="14" cy="8.5" r="1.4" fill="#000"/><ellipse cx="10.5" cy="12.6" rx="1.7" ry="1.1" fill="#d2a283"/><ellipse cx="10.5" cy="11.6" rx="1.2" ry="0.9" fill="#111"/><rect x="9.6" y="13.3" width="1.9" height="1.7" fill="#fff"/></g><g transform="translate(785.7,125.7) scale(1.0)" opacity="1"><circle cx="2.4" cy="5" r="2.3" fill="#76bce6"/><circle cx="18.6" cy="5" r="2.3" fill="#76bce6"/><circle cx="1.5" cy="15" r="1.4" fill="#d2a283"/><circle cx="19.5" cy="15" r="1.4" fill="#d2a283"/><circle cx="3.9" cy="26.8" r="1.5" fill="#d2a283"/><circle cx="17.1" cy="26.8" r="1.5" fill="#d2a283"/><path d="M10.5,0.3 C15.6,0.3 18.6,3.4 18.6,8 L18.6,14 C18.6,17 19.5,19 19.5,22 C19.5,26 15.5,28.5 10.5,28.5 C5.5,28.5 1.5,26 1.5,22 C1.5,19 2.4,17 2.4,14 L2.4,8 C2.4,3.4 5.4,0.3 10.5,0.3 Z" fill="#76bce6"/><circle cx="7" cy="8.4" r="3.2" fill="#fff"/><circle cx="14" cy="8.4" r="3.2" fill="#fff"/><circle cx="7.3" cy="8.5" r="1.4" fill="#000"/><circle cx="14" cy="8.5" r="1.4" fill="#000"/><ellipse cx="10.5" cy="12.6" rx="1.7" ry="1.1" fill="#d2a283"/><ellipse cx="10.5" cy="11.6" rx="1.2" ry="0.9" fill="#111"/><rect x="9.6" y="13.3" width="1.9" height="1.7" fill="#fff"/></g><path d="M734.5,133 l15,15 M749.5,133 l-15,15" stroke="#6e7072" stroke-width="2.2" fill="none"/><path d="M910.5,133 l15,15 M925.5,133 l-15,15" stroke="#7e8183" stroke-width="2.2" fill="none"/><circle cx="3005.5" cy="131" r="3.3" fill="#afb1b3"/><circle cx="3005.5" cy="140" r="3.3" fill="#afb1b3"/><circle cx="3005.5" cy="149.5" r="3.3" fill="#afb1b3"/></svg>
<div class="t fit" style="left:644px;top:129.38px;font-size:22px;color:#bbbbbb;letter-spacing:0.512px;text-indent:-1.00px;">user.go</div>
<div class="t fit" style="left:820px;top:129.38px;font-size:22px;color:#bbbbbb;letter-spacing:0.618px;text-indent:0.00px;">cmd.go</div>
<div class="b" style="left:587px;top:168px;width:2443px;height:1454px;background:#2b2b2b;overflow:hidden;">
<div class="b" style="left:0px;top:0px;width:133px;height:1454px;background:#313335;"></div>
<div class="b" style="left:133px;top:14px;width:2310px;height:52px;background:#323232;"></div>
<div class="b" style="left:0px;top:14px;width:133px;height:52px;background:#333537;"></div>
<div class="b" style="left:213px;top:0px;width:2px;height:1418px;background:#3a3a3a;"></div>
<div class="b" style="left:285px;top:66px;width:2px;height:1300px;background:#3a3a3a;"></div>
<div class="b" style="left:357px;top:222px;width:2px;height:832px;background:#3a3a3a;"></div>
<div class="b" style="left:429px;top:326px;width:2px;height:104px;background:#3a3a3a;"></div>
<div class="b" style="left:429px;top:586px;width:2px;height:52px;background:#3a3a3a;"></div>
<div class="b" style="left:429px;top:794px;width:2px;height:208px;background:#3a3a3a;"></div>
<div class="b" style="left:501px;top:898px;width:2px;height:52px;background:#3a3a3a;"></div>
<div class="b" style="left:2307px;top:0px;width:2px;height:1454px;background:#454545;"></div>
<div class="b" style="left:111px;top:14px;width:2px;height:1404px;background:#5a8a80;"></div>
<div class="b" style="left:132px;top:0px;width:2px;height:1454px;background:#555555;"></div>
<svg class="b" style="left:0;top:0;" width="2443" height="1454" viewBox="587 168 2443 1454"><path d="M710.2,200 H729.8 V216 L720,225.5 L710.2,216 Z" fill="#2b2b2b" stroke="#5c5c5c" stroke-width="2"/><path d="M714.5,210 H725.5" stroke="#5c5c5c" stroke-width="2"/><path d="M710.2,356 H729.8 V372 L720,381.5 L710.2,372 Z" fill="#2b2b2b" stroke="#5c5c5c" stroke-width="2"/><path d="M714.5,366 H725.5" stroke="#5c5c5c" stroke-width="2"/><path d="M710.2,928 H729.8 V944 L720,953.5 L710.2,944 Z" fill="#2b2b2b" stroke="#5c5c5c" stroke-width="2"/><path d="M714.5,938 H725.5" stroke="#5c5c5c" stroke-width="2"/><path d="M710.2,1032 H729.8 V1048 L720,1057.5 L710.2,1048 Z" fill="#2b2b2b" stroke="#5c5c5c" stroke-width="2"/><path d="M714.5,1042 H725.5" stroke="#5c5c5c" stroke-width="2"/><path d="M710.2,1155.5 H729.8 V1140 L720,1130.5 L710.2,1140 Z" fill="#2b2b2b" stroke="#5c5c5c" stroke-width="2"/><path d="M714.5,1146 H725.5" stroke="#5c5c5c" stroke-width="2"/><path d="M710.2,1207.5 H729.8 V1192 L720,1182.5 L710.2,1192 Z" fill="#2b2b2b" stroke="#5c5c5c" stroke-width="2"/><path d="M714.5,1198 H725.5" stroke="#5c5c5c" stroke-width="2"/><path d="M710.2,1259.5 H729.8 V1244 L720,1234.5 L710.2,1244 Z" fill="#2b2b2b" stroke="#5c5c5c" stroke-width="2"/><path d="M714.5,1250 H725.5" stroke="#5c5c5c" stroke-width="2"/><path d="M710.2,1571.5 H729.8 V1556 L720,1546.5 L710.2,1556 Z" fill="#2b2b2b" stroke="#5c5c5c" stroke-width="2"/><path d="M714.5,1562 H725.5" stroke="#5c5c5c" stroke-width="2"/><path d="M710.2,1623.5 H729.8 V1608 L720,1598.5 L710.2,1608 Z" fill="#2b2b2b" stroke="#5c5c5c" stroke-width="2"/><path d="M714.5,1614 H725.5" stroke="#5c5c5c" stroke-width="2"/><path d="M762,188 C768,188 772.3,192.300 772.3,198 C772.3,202 770,204.500 768.500,207.500 H755.500 C754,204.500 751.700,202 751.700,198 C751.700,192.300 756,188 762,188 Z" fill="#f0a732"/><rect x="756" y="209.300" width="12" height="2.200" fill="#d6d6d6"/><rect x="757" y="213.300" width="10" height="2.200" fill="#d6d6d6"/></svg>
<div class="b" style="left:1461px;top:14px;width:18px;height:52px;background:#3b514d;"></div>
<div class="b" style="left:291px;top:1366px;width:18px;height:52px;background:#3b514d;"></div>
<div class="cl" style="left:290px;top:-34px;">Brief: <span class="s">"start http server of simple </span><span class="s w">goframe</span><span class="s"> demos"</span><span class="k">,</span></div>
<div class="ln" style="left:11.5px;top:18px;color:#a4a3a3;">20</div>
<div class="cl" style="left:290px;top:18px;">Func: <span class="k">func</span>(ctx <span class="p">context</span>.<span class="y">Context</span><span class="k">,</span> parser *<span class="p">gcmd</span>.<span class="y">Parser</span>) (err <span class="k">error</span>) <span class="hb">{</span></div>
<div class="ln" style="left:11.5px;top:70px;color:#606366;">21</div>
<div class="cl" style="left:362px;top:70px;">s := <span class="p">g</span>.<span class="f">Server</span>()</div>
<div class="ln" style="left:11.5px;top:122px;color:#606366;">22</div>
<div class="cl" style="left:362px;top:122px;">s.<span class="f">Use</span>(<span class="p">ghttp</span>.<span class="d">MiddlewareHandlerResponse</span>)</div>
<div class="ln" style="left:11.5px;top:174px;color:#606366;">23</div>
<div class="cl" style="left:362px;top:174px;">s.<span class="f">Group</span>(<span class="s">"/"</span><span class="k">,</span> <span class="k">func</span>(group *<span class="p">ghttp</span>.<span class="y">RouterGroup</span>) {</div>
<div class="ln" style="left:11.5px;top:226px;color:#606366;">24</div>
<div class="cl" style="left:434px;top:226px;"><span class="c">// Group middlewares.</span></div>
<div class="ln" style="left:11.5px;top:278px;color:#606366;">25</div>
<div class="cl" style="left:434px;top:278px;">group.<span class="f">Middleware</span>(</div>
<div class="ln" style="left:11.5px;top:330px;color:#606366;">26</div>
<div class="cl" style="left:506px;top:330px;"><span class="p">service</span>.<span class="f">Middleware</span>().<span class="d">Ctx</span><span class="k">,</span></div>
<div class="ln" style="left:11.5px;top:382px;color:#606366;">27</div>
<div class="cl" style="left:506px;top:382px;"><span class="p">ghttp</span>.<span class="d">MiddlewareCORS</span><span class="k">,</span></div>
<div class="ln" style="left:11.5px;top:434px;color:#606366;">28</div>
<div class="cl" style="left:434px;top:434px;">)</div>
<div class="ln" style="left:11.5px;top:486px;color:#606366;">29</div>
<div class="cl" style="left:434px;top:486px;"><span class="c">// Register route handlers.</span></div>
<div class="ln" style="left:11.5px;top:538px;color:#606366;">30</div>
<div class="cl" style="left:434px;top:538px;">group.<span class="f">Bind</span>(</div>
<div class="ln" style="left:11.5px;top:590px;color:#606366;">31</div>
<div class="cl" style="left:506px;top:590px;"><span class="p">controller</span>.User<span class="k">,</span></div>
<div class="ln" style="left:11.5px;top:642px;color:#606366;">32</div>
<div class="cl" style="left:434px;top:642px;">)</div>
<div class="ln" style="left:11.5px;top:694px;color:#606366;">33</div>
<div class="cl" style="left:434px;top:694px;"><span class="c">// Special handler that needs authentication.</span></div>
<div class="ln" style="left:11.5px;top:746px;color:#606366;">34</div>
<div class="cl" style="left:434px;top:746px;">group.<span class="f">Group</span>(<span class="s">"/"</span><span class="k">,</span> <span class="k">func</span>(group *<span class="p">ghttp</span>.<span class="y">RouterGroup</span>) {</div>
<div class="ln" style="left:11.5px;top:798px;color:#606366;">35</div>
<div class="cl" style="left:506px;top:798px;">group.<span class="f">Middleware</span>(<span class="p">service</span>.<span class="f">Middleware</span>().<span class="d">Auth</span>)</div>
<div class="ln" style="left:11.5px;top:850px;color:#606366;">36</div>
<div class="cl" style="left:506px;top:850px;">group.<span class="f">ALLMap</span>(<span class="p">g</span>.<span class="y">Map</span>{</div>
<div class="ln" style="left:11.5px;top:902px;color:#606366;">37</div>
<div class="cl" style="left:578px;top:902px;"><span class="s">"/user/profile"</span>: <span class="p">controller</span>.User.<span class="d">Profile</span><span class="k">,</span></div>
<div class="ln" style="left:11.5px;top:954px;color:#606366;">38</div>
<div class="cl" style="left:506px;top:954px;">})</div>
<div class="ln" style="left:11.5px;top:1006px;color:#606366;">39</div>
<div class="cl" style="left:434px;top:1006px;">})</div>
<div class="ln" style="left:11.5px;top:1058px;color:#606366;">40</div>
<div class="cl" style="left:362px;top:1058px;">})</div>
<div class="ln" style="left:11.5px;top:1110px;color:#606366;">41</div>
<div class="cl" style="left:362px;top:1110px;"><span class="c">// Custom enhance API document.</span></div>
<div class="ln" style="left:11.5px;top:1162px;color:#606366;">42</div>
<div class="cl" style="left:362px;top:1162px;"><span class="f">enhanceOpenAPIDoc</span>(s)</div>
<div class="ln" style="left:11.5px;top:1214px;color:#606366;">43</div>
<div class="cl" style="left:362px;top:1214px;"><span class="c">// Just run the server.</span></div>
<div class="ln" style="left:11.5px;top:1266px;color:#606366;">44</div>
<div class="cl" style="left:362px;top:1266px;">s.<span class="f">Run</span>()</div>
<div class="ln" style="left:11.5px;top:1318px;color:#606366;">45</div>
<div class="cl" style="left:362px;top:1318px;"><span class="k">return nil</span></div>
<div class="ln" style="left:11.5px;top:1370px;color:#606366;">46</div>
<div class="cl" style="left:290px;top:1370px;"><span class="hb">}</span><span class="k">,</span></div>
<div class="ln" style="left:11.5px;top:1422px;color:#606366;">47</div>
<div class="cl" style="left:218px;top:1422px;">}</div>
<svg class="b" style="left:937px;top:0;" width="130" height="10" viewBox="1524 168 130 10"><path d="M1526,174 L1530,170 L1534,174 L1538,170 L1542,174 L1546,170 L1550,174 L1554,170 L1558,174 L1562,170 L1566,174 L1570,170 L1574,174 L1578,170 L1582,174 L1586,170 L1590,174 L1594,170 L1598,174 L1602,170 L1606,174 L1610,170 L1614,174 L1618,170 L1622,174 L1626,170 L1630,174 L1634,170 L1638,174 L1642,170 L1646,174 L1650,170" fill="none" stroke="#5f9a58" stroke-width="1.6"/></svg>
<div class="b" style="left:1478px;top:20px;width:4px;height:42px;background:#c8c8c8;"></div>
<div class="b" style="left:2289px;top:0px;width:149px;height:48px;background:#2b2b2b;border-radius:0 0 8px 8px;"></div>
<svg class="b" style="left:0;top:0;" width="2443" height="1454" viewBox="587 168 2443 1454"><path d="M2895.6,191.8 L2903,198.4 L2914.8,185.4" fill="none" stroke="#499c54" stroke-width="4.8"/><path d="M2894,207.2 L2899,202.8 L2904,207.2 L2909,202.8 L2914,207.2 L2916.4,204" fill="none" stroke="#499c54" stroke-width="1.7"/><path d="M2955.5,198.0 L2963.5,190.0 L2971.5,198.0" fill="none" stroke="#afb1b3" stroke-width="2.6"/><path d="M2997.7,191.0 L3005.7,199.0 L3013.7,191.0" fill="none" stroke="#afb1b3" stroke-width="2.6"/></svg>
<div class="t" style="left:2336px;top:14.84px;font-size:25px;color:#bbbbbb;">1</div>
<div class="b" style="left:2421.5px;top:260px;width:15.5px;height:643px;background:#4b4b4b;border-radius:8px;"></div>
</div>
<div class="b" style="left:587px;top:1622px;width:2443px;height:45px;background:#303234;"></div>
<div class="b" style="left:587px;top:1622px;width:2443px;height:1px;background:#393b3d;"></div>
<div class="t fit" style="left:740px;top:1633.04px;font-size:25px;color:#bbbbbb;letter-spacing:0.453px;text-indent:0.00px;">func(ctx context.Context, parser *gcmd.Parser) (err error)</div>
<div class="b" style="left:764px;top:162px;width:178px;height:6px;background:#4a88c7;"></div>
<div class="b" style="left:0px;top:1666px;width:3072px;height:1px;background:#323435;"></div>
<div class="b" style="left:0px;top:1708px;width:3072px;height:2px;background:#474747;"></div>
<svg class="b" style="left:0px;top:1667px;" width="3072" height="83" viewBox="0 1667 3072 83"><path d="M66,1681 V1697 M76.800,1685 V1687 C76.800,1692 70,1691.500 66.500,1692.500" fill="none" stroke="#afb1b3" stroke-width="4.4"/><circle cx="66" cy="1680.200" r="3.9" fill="#afb1b3"/><circle cx="66" cy="1697.600" r="3.9" fill="#afb1b3"/><circle cx="76.800" cy="1684.400" r="3.4" fill="#afb1b3"/><circle cx="171" cy="1686" r="7.800" fill="none" stroke="#5d5f61" stroke-width="4"/><path d="M176.500,1691.500 L183.500,1698.500" stroke="#5d5f61" stroke-width="4.4"/><path d="M278,1678 L294.500,1688 L278,1698 Z" fill="#afb1b3"/><rect x="388" y="1680.0" width="4" height="3.6" fill="#afb1b3"/><rect x="394.500" y="1680.0" width="13.500" height="3.6" fill="#afb1b3"/><rect x="388" y="1686.5" width="4" height="3.6" fill="#afb1b3"/><rect x="394.500" y="1686.5" width="13.500" height="3.6" fill="#afb1b3"/><rect x="388" y="1693.0" width="4" height="3.6" fill="#afb1b3"/><rect x="394.500" y="1693.0" width="13.500" height="3.6" fill="#afb1b3"/><circle cx="533" cy="1688" r="10.300" fill="#afb1b3"/><rect x="531.400" y="1681" width="3.2" height="8.500" fill="#3c3f41"/><rect x="531.400" y="1691.500" width="3.2" height="3.2" fill="#3c3f41"/><rect x="694" y="1678" width="22" height="20" fill="#afb1b3"/><path d="M698.500,1682.500 L704,1687 L698.500,1691.500" fill="none" stroke="#3c3f41" stroke-width="2.2"/><rect x="705.500" y="1691.500" width="7" height="2.2" fill="#3c3f41"/><rect x="2818" y="1677" width="24" height="24" rx="2.5" fill="#3c3f41" stroke="#000" stroke-width="2"/><rect x="2818" y="1677" width="24" height="5.2" fill="#000"/><rect x="2833.1" y="1678.4" width="1.5" height="1.5" fill="#777"/><rect x="2836.1" y="1678.4" width="1.5" height="1.5" fill="#777"/><rect x="2839.0" y="1678.4" width="1.5" height="1.5" fill="#777"/><text x="2820.8" y="1696" font-family="Liberation Sans, sans-serif" font-weight="700" font-size="11.5" fill="#000" textLength="18" lengthAdjust="spacingAndGlyphs">/API</text><path d="M17,1719 H35 V1737 H17 Z" fill="none" stroke="#c4c6c8" stroke-width="2"/><path d="M12.8,1722 V1741 H32" fill="none" stroke="#c4c6c8" stroke-width="2"/><path d="M2810,1720 V1740 M2821.700,1722 V1725 C2821.700,1731 2812,1731 2810,1735" fill="none" stroke="#afb1b3" stroke-width="2.8"/><circle cx="2810" cy="1719.500" r="3.7" fill="#afb1b3"/><circle cx="2810" cy="1740.500" r="3.7" fill="#afb1b3"/><circle cx="2821.700" cy="1721.800" r="3.5" fill="#afb1b3"/><rect x="2932" y="1728.200" width="16" height="12" fill="#afb1b3"/><path d="M2936.300,1728.500 V1724.500 C2936.300,1718 2927.900,1718 2927.900,1724.500 V1727.500" fill="none" stroke="#afb1b3" stroke-width="3.2"/><path d="M2977,1736 C2972,1736 2970,1732.500 2970,1730 C2970,1727 2972.500,1724.500 2975.500,1724.500 C2976.500,1720 2980.500,1717 2985,1717 C2990,1717 2993.500,1720.500 2994,1724.500 C2998,1724.500 3000.500,1727 3000.500,1730 C3000.500,1733.500 2998,1736 2994,1736 Z" fill="#afb1b3"/><text x="2979.500" y="1733" font-family="Liberation Sans, sans-serif" font-weight="700" font-size="17" fill="#3c3f41">?</text><circle cx="2996" cy="1738.500" r="9" fill="#3c3f41"/></svg>
<svg class="b" style="left:0;top:1667px;" width="3072" height="83" viewBox="0 1667 3072 83"><path d="M2994.31,1733.58 L2994.42,1731.07 L2997.58,1731.07 L2997.69,1733.58 L2999.42,1734.58 L3001.65,1733.41 L3003.23,1736.16 L3001.10,1737.50 L3001.10,1739.50 L3003.23,1740.84 L3001.65,1743.59 L2999.42,1742.42 L2997.69,1743.42 L2997.58,1745.93 L2994.42,1745.93 L2994.31,1743.42 L2992.58,1742.42 L2990.35,1743.59 L2988.77,1740.84 L2990.90,1739.50 L2990.90,1737.50 L2988.77,1736.16 L2990.35,1733.41 L2992.58,1734.58 Z M2998.4,1738.5 A2.4,2.4 0 1 0 2993.6,1738.5 A2.4,2.4 0 1 0 2998.4,1738.5 Z" fill="#afb1b3" fill-rule="evenodd"/><circle cx="3036" cy="1730" r="12.2" fill="#c75450"/><rect x="3034.100" y="1722" width="3.8" height="8" fill="#3c3f41"/><rect x="3034.100" y="1734" width="3.8" height="4" fill="#3c3f41"/></svg>
<div class="t fit" style="left:92px;top:1677.88px;font-size:22px;color:#bbbbbb;letter-spacing:0.500px;text-indent:-1.00px;">Git</div>
<div class="t fit" style="left:194px;top:1677.88px;font-size:22px;color:#777777;letter-spacing:0.479px;text-indent:-1.00px;">Find</div>
<div class="t fit" style="left:308px;top:1677.88px;font-size:22px;color:#bbbbbb;letter-spacing:-0.062px;text-indent:-1.00px;">Run</div>
<div class="t fit" style="left:418px;top:1677.88px;font-size:22px;color:#bbbbbb;letter-spacing:-0.680px;text-indent:0.00px;">TODO</div>
<div class="t fit" style="left:554px;top:1677.88px;font-size:22px;color:#bbbbbb;letter-spacing:0.297px;text-indent:-1.00px;">Problems</div>
<div class="t fit" style="left:726px;top:1677.88px;font-size:22px;color:#bbbbbb;letter-spacing:0.251px;text-indent:0.00px;">Terminal</div>
<div class="t fit" style="left:2853px;top:1677.88px;font-size:22px;color:#bbbbbb;letter-spacing:0.217px;text-indent:0.00px;">Audit Problems</div>
<div class="t fit" style="left:62px;top:1720.38px;font-size:22px;color:#bbbbbb;letter-spacing:0.439px;text-indent:-1.00px;">Compilation failed (8 minutes ago)</div>
<div class="t fit" style="left:2522.5px;top:1720.38px;font-size:22px;color:#bbbbbb;letter-spacing:0.795px;text-indent:-1.00px;">20:75</div>
<div class="t fit" style="left:2604px;top:1720.38px;font-size:22px;color:#bbbbbb;letter-spacing:-0.235px;text-indent:-1.00px;">LF</div>
<div class="t fit" style="left:2652px;top:1720.38px;font-size:22px;color:#bbbbbb;letter-spacing:0.977px;text-indent:-1.00px;">UTF-8</div>
<div class="t fit" style="left:2742px;top:1720.38px;font-size:22px;color:#bbbbbb;letter-spacing:-0.118px;text-indent:0.00px;">Tab</div>
<div class="t fit" style="left:2836px;top:1720.38px;font-size:22px;color:#bbbbbb;letter-spacing:0.618px;text-indent:-1.00px;">master</div>
<div class="frame"></div>
</div>
</body></html>
